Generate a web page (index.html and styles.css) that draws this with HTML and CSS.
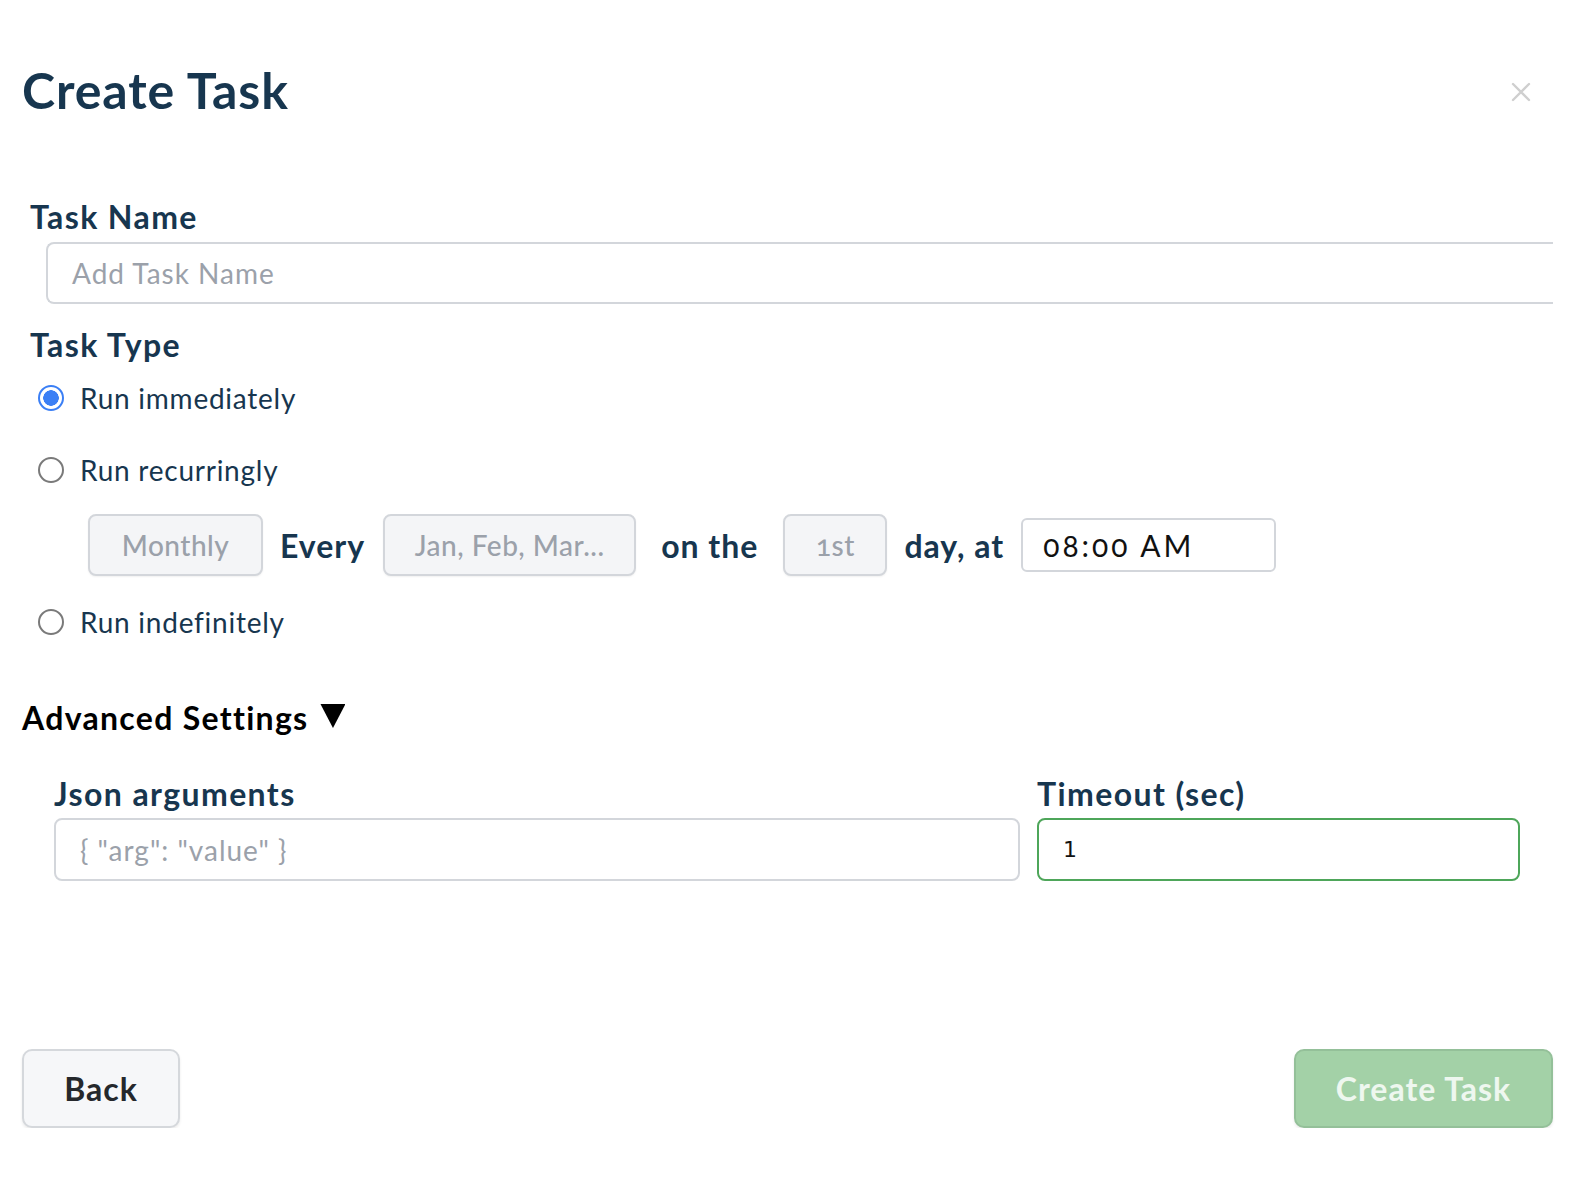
FILE: index.html
```html
<!DOCTYPE html>
<html lang="en">
<head>
<meta charset="utf-8">
<title>Create Task</title>
<link rel="stylesheet" href="styles.css">
</head>
<body>
<div class="modal">
  <header class="modal-header">
    <h1 class="modal-title">Create Task</h1>
    <button class="close-btn" aria-label="Close">
      <svg width="20" height="20" viewBox="0 0 20 20"><path d="M2 2 L18 18 M18 2 L2 18" stroke="#cfcfcf" stroke-width="2.4" stroke-linecap="round" fill="none"/></svg>
    </button>
  </header>

  <section class="form">
    <label class="field-label label-taskname">Task Name</label>
    <div class="name-input"><span class="placeholder">Add Task Name</span></div>

    <div class="field-label label-tasktype">Task Type</div>

    <div class="radio-row row-1">
      <span class="radio checked"></span><span class="radio-text">Run immediately</span>
    </div>
    <div class="radio-row row-2">
      <span class="radio"></span><span class="radio-text">Run recurringly</span>
    </div>

    <div class="recur-row">
      <div class="pill pill-monthly">Monthly</div>
      <span class="recur-word">Every</span>
      <div class="pill pill-months">Jan, Feb, Mar...</div>
      <span class="recur-word wide">on the</span>
      <div class="pill pill-day">1st</div>
      <span class="recur-word">day, at</span>
      <div class="time-box">08:00 AM</div>
    </div>

    <div class="radio-row row-3">
      <span class="radio"></span><span class="radio-text">Run indefinitely</span>
    </div>

    <div class="advanced">Advanced Settings <span class="tri"></span></div>

    <div class="adv-grid">
      <div class="adv-field">
        <div class="field-label">Json arguments</div>
        <div class="text-input"><span class="placeholder">{ "arg": "value" }</span></div>
      </div>
      <div class="adv-field">
        <div class="field-label">Timeout (sec)</div>
        <div class="text-input valid"><span class="value">1</span></div>
      </div>
    </div>
  </section>

  <footer class="modal-footer">
    <button class="btn btn-back">Back</button>
    <button class="btn btn-create">Create Task</button>
  </footer>
</div>
</body>
</html>
```

FILE: styles.css
```css
* { box-sizing: border-box; }
html, body {
  margin: 0;
  padding: 0;
  background: #ffffff;
  overflow: hidden;
}
body {
  font-family: Lato, "Open Sans", sans-serif;
  color: #17364f;
}
.modal { padding-left: 22px; }

.modal-header {
  height: 180px;
  width: 1524px;
  display: flex;
  align-items: center;
  justify-content: space-between;
  padding-right: 15px;
}
.modal-title {
  margin: 0;
  font-size: 50px;
  line-height: 60px;
  font-weight: 700;
  color: #17364f;
  letter-spacing: 0.9px;
}
.close-btn {
  border: 0;
  background: transparent;
  padding: 0;
  width: 20px;
  height: 20px;
  margin-top: 4px;
  display: block;
}
.close-btn svg { display: block; }

.form { display: flex; flex-direction: column; }

.field-label {
  font-size: 32px;
  line-height: 40px;
  font-weight: 700;
  color: #17364f;
  letter-spacing: 1.4px;
}
.label-taskname { margin-top: 17px; margin-left: 8px; display: block; }
.name-input {
  margin-top: 5px;
  margin-left: 24px;
  width: 1507px;
  height: 62px;
  border: 2px solid #d3d6db;
  border-right: 0;
  border-radius: 8px 0 0 8px;
  display: flex;
  align-items: center;
  padding-left: 24px;
}
.placeholder { color: #9ba1aa; font-size: 28px; letter-spacing: 1px; }
.label-tasktype { margin-top: 21px; margin-left: 8px; }

.radio-row {
  height: 40px;
  display: flex;
  align-items: center;
  margin-left: 16px;
}
.row-1 { margin-top: 13px; }
.row-2 { margin-top: 32px; }
.row-3 { margin-top: 26px; }
.radio {
  width: 26px;
  height: 26px;
  border-radius: 50%;
  border: 2px solid #7a7a7a;
  background: #fff;
  flex: none;
}
.radio.checked {
  border-color: #3b7ff5;
  background: radial-gradient(circle, #3b7ff5 0 7.5px, #ffffff 8px);
}
.radio-text {
  margin-left: 16px;
  font-size: 28px;
  color: #17364f;
  letter-spacing: 0.75px;
}

.recur-row {
  margin-top: 24px;
  margin-left: 66px;
  height: 62px;
  display: flex;
  align-items: center;
  gap: 17px;
}
.pill {
  height: 62px;
  border: 2px solid #d3d6db;
  border-radius: 8px;
  background: #f4f5f7;
  color: #9ba1aa;
  font-size: 28px;
  font-weight: 500;
  letter-spacing: 0.5px;
  display: flex;
  align-items: center;
  justify-content: center;
  box-shadow: 0 1px 2px rgba(0,0,0,0.06);
  font-variant-numeric: oldstyle-nums;
}
.pill-monthly { width: 175px; }
.pill-months { width: 253px; margin-left: 1px; }
.pill-day { width: 104px; }
.recur-word {
  font-size: 32px;
  font-weight: 700;
  color: #17364f;
  letter-spacing: 1px;
}
.recur-word.wide { margin: 0 8px; }
.time-box {
  width: 255px;
  height: 54px;
  border: 2px solid #d3d6db;
  border-radius: 6px;
  font-size: 30px;
  color: #111;
  display: flex;
  align-items: center;
  padding-left: 20px;
  letter-spacing: 3px;
  font-variant-numeric: oldstyle-nums;
}

.advanced {
  margin-top: 55px;
  height: 40px;
  display: flex;
  align-items: center;
  font-size: 32px;
  font-weight: 700;
  color: #000;
  letter-spacing: 1.3px;
}
.tri {
  width: 25px;
  height: 24px;
  margin-left: 12px;
  background: #000;
  clip-path: polygon(0 0, 100% 0, 50% 100%);
  margin-top: -2px;
}

.adv-grid {
  margin-top: 37px;
  margin-left: 32px;
  width: 1466px;
  display: grid;
  grid-template-columns: 966px 483px;
  column-gap: 17px;
}
.adv-field { display: flex; flex-direction: column; }
.text-input {
  margin-top: 4px;
  height: 63px;
  border: 2px solid #d3d6db;
  border-radius: 8px;
  display: flex;
  align-items: center;
  padding-left: 24px;
}
.text-input.valid { border-color: #4ea65a; }
.text-input .value {
  font-family: "DejaVu Sans", "Liberation Sans", sans-serif;
  font-size: 22px;
  color: #111;
}

.modal-footer {
  margin-top: 168px;
  width: 1531px;
  display: flex;
  justify-content: space-between;
}
.btn {
  height: 79px;
  border-radius: 10px;
  font-family: Lato, "Open Sans", sans-serif;
  font-size: 32px;
  font-weight: 700;
  letter-spacing: 1px;
  padding: 0;
  box-shadow: 0 2px 3px rgba(0,0,0,0.08);
}
.btn-back {
  width: 158px;
  background: #f6f7f9;
  border: 2px solid #d5d8dc;
  color: #25282c;
}
.btn-create {
  width: 259px;
  background: #a3d1a7;
  border: 2px solid #94c099;
  color: #eef7ef;
}
```
